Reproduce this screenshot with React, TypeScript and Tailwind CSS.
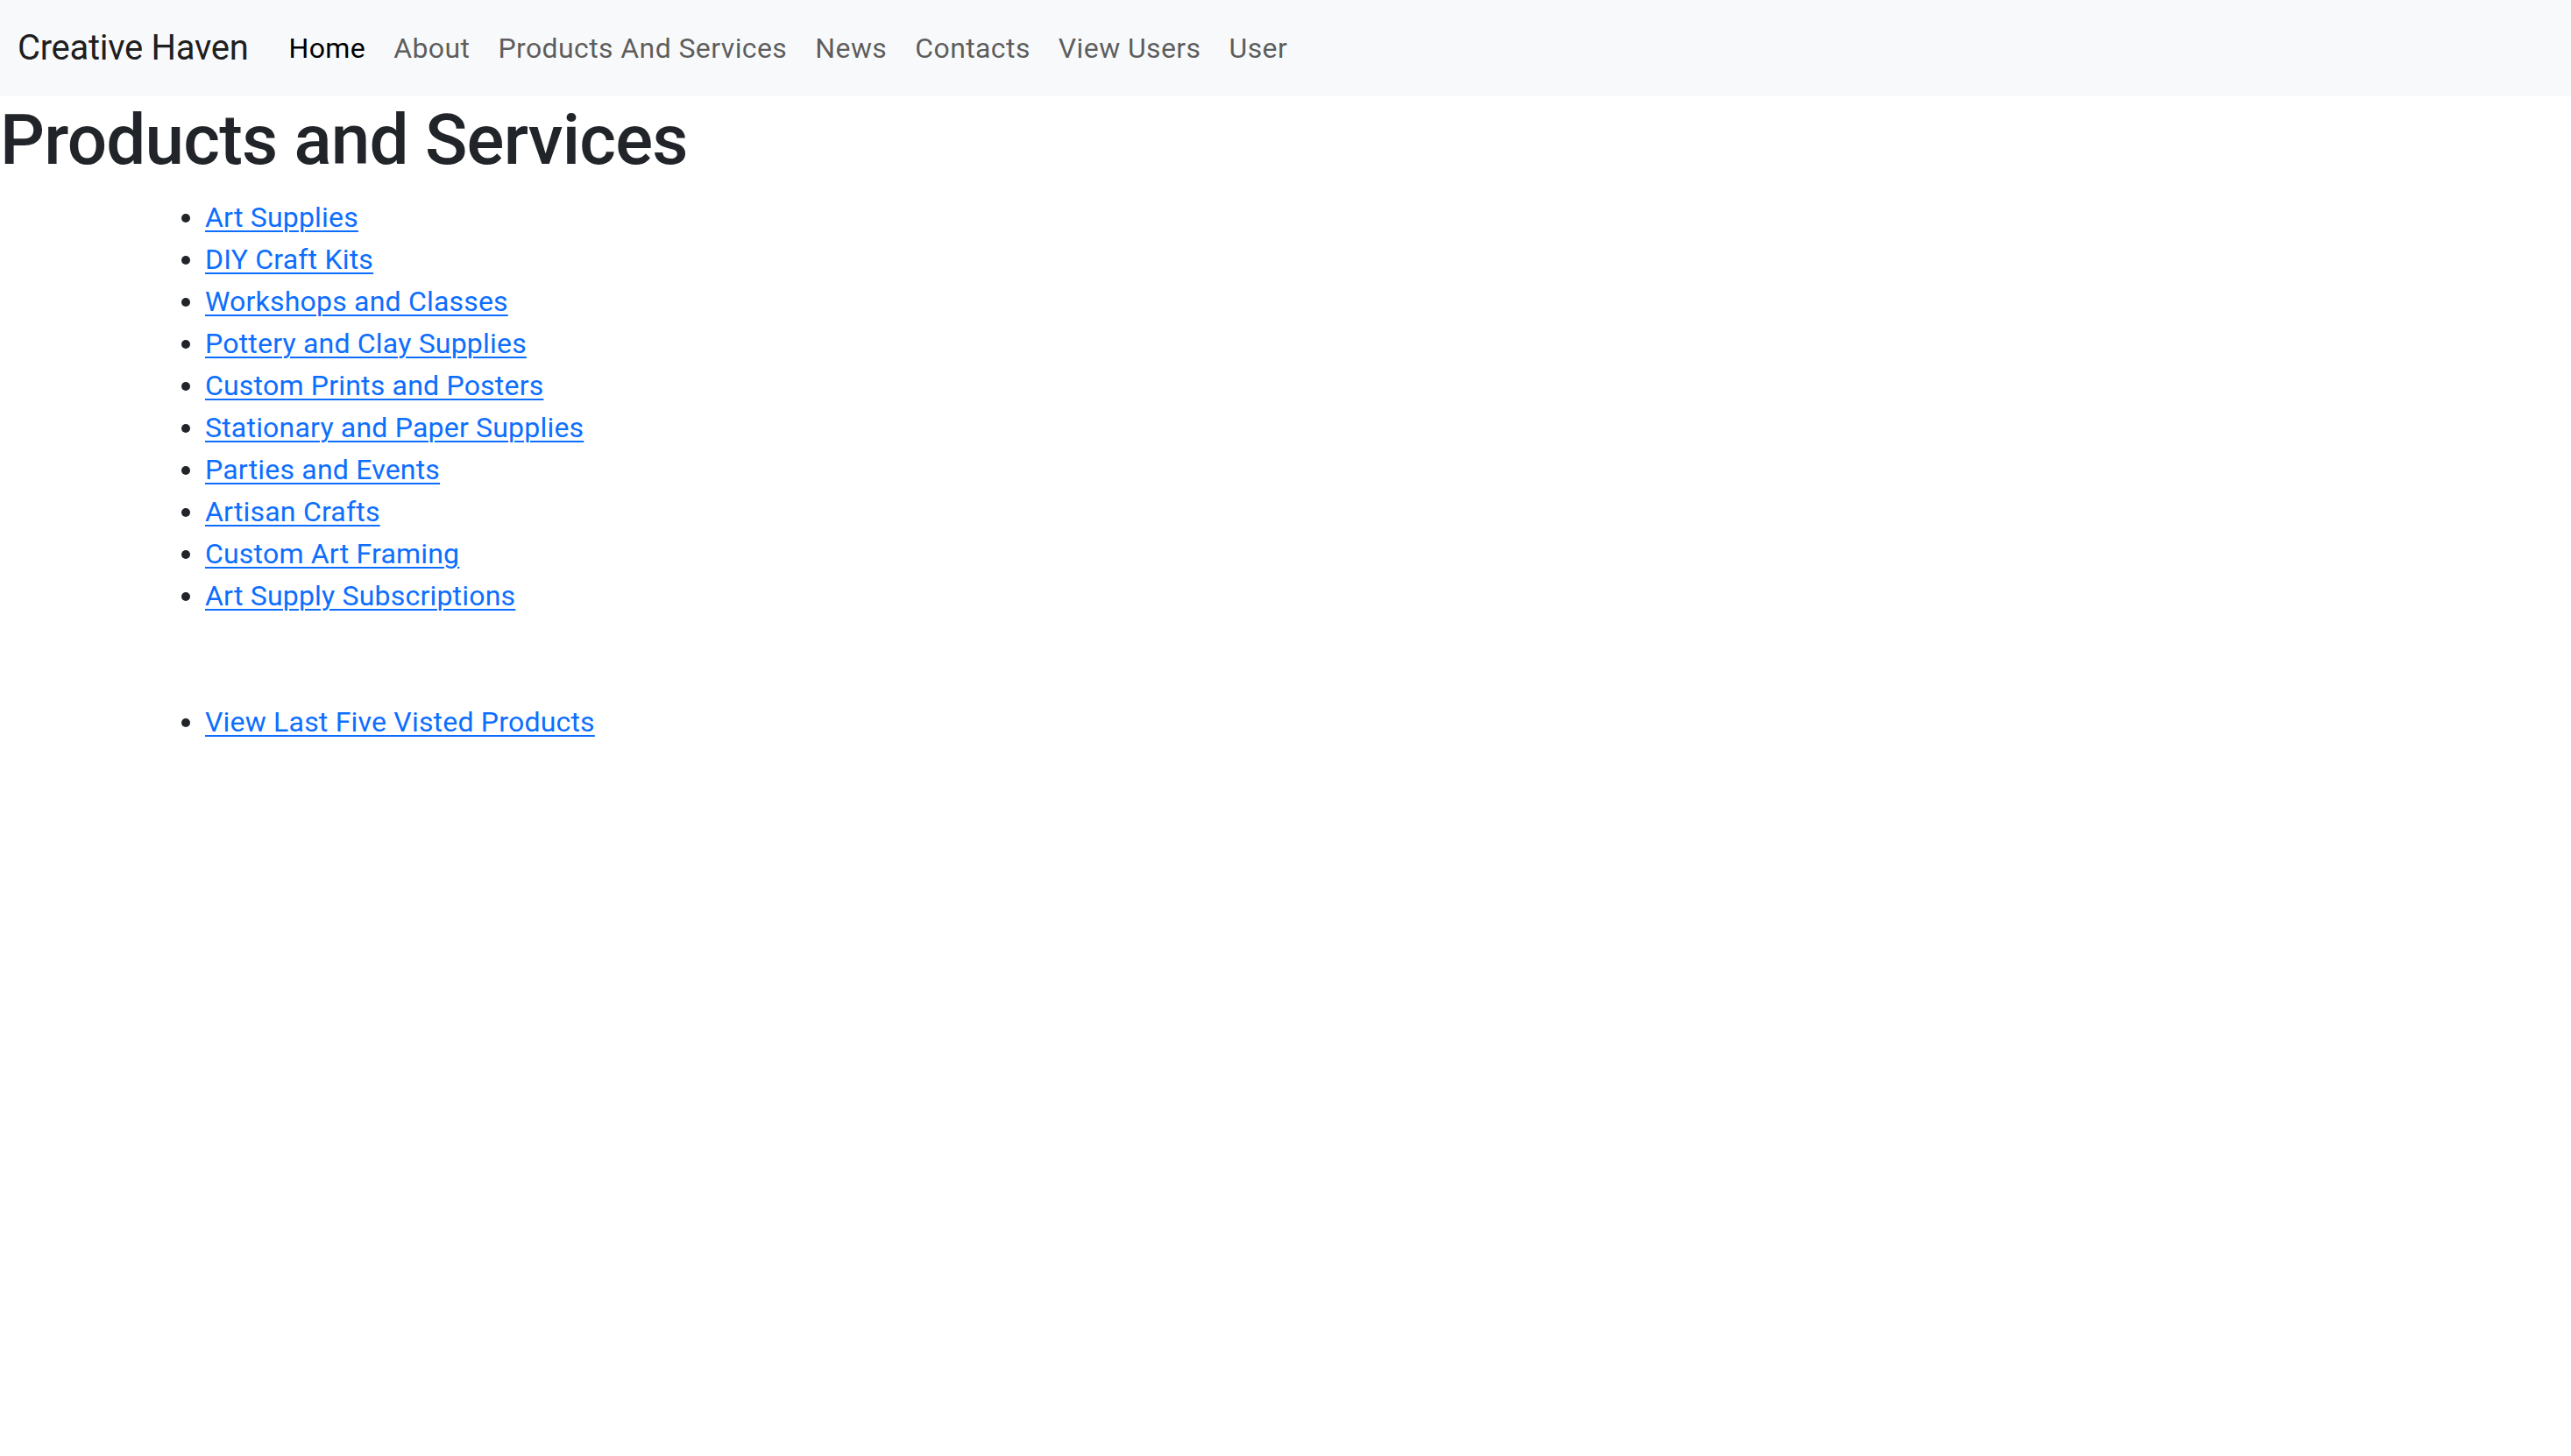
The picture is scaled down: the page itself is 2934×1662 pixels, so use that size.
import React from "react";

const items = [
  "Art Supplies",
  "DIY Craft Kits",
  "Workshops and Classes",
  "Pottery and Clay Supplies",
  "Custom Prints and Posters",
  "Stationary and Paper Supplies",
  "Parties and Events",
  "Artisan Crafts",
  "Custom Art Framing",
  "Art Supply Subscriptions",
];

const navLinks = ["About", "Products And Services", "News", "Contacts", "View Users", "User"];

export default function App() {
  return (
    <div className="min-h-screen bg-white font-['Roboto',sans-serif] text-[#212529]">
      <nav className="flex h-[110px] items-center bg-[#f8f9fa] px-[20px]">
        <a href="#" className="mr-[30px] text-[40px] leading-[60px] tracking-[-0.3px] text-black/90 no-underline">
          Creative Haven
        </a>
        <ul className="flex items-center">
          <li>
            <a href="#" className="block px-[16px] text-[32px] leading-[48px] tracking-[0.4px] text-black">
              Home
            </a>
          </li>
          {navLinks.map((l) => (
            <li key={l}>
              <a href="#" className="block px-[16px] text-[32px] leading-[48px] tracking-[0.4px] text-black/65">
                {l}
              </a>
            </li>
          ))}
        </ul>
      </nav>
      <h1 className="mb-[16px] pt-[2px] text-[80px] font-medium leading-[96px] tracking-[-0.8px] text-[#212529]">
        Products and Services
      </h1>
      <ul className="list-disc pl-[234px] text-[32px] leading-[48px] tracking-[0.2px]">
        {items.map((i) => (
          <li key={i}>
            <a href="#" className="text-[#0d6efd] underline decoration-[2px] underline-offset-[4px]">
              {i}
            </a>
          </li>
        ))}
      </ul>
      <ul className="mt-[96px] list-disc pl-[234px] text-[32px] leading-[48px] tracking-[0.2px]">
        <li>
          <a href="#" className="text-[#0d6efd] underline decoration-[2px] underline-offset-[4px]">
            View Last Five Visted Products
          </a>
        </li>
      </ul>
    </div>
  );
}
